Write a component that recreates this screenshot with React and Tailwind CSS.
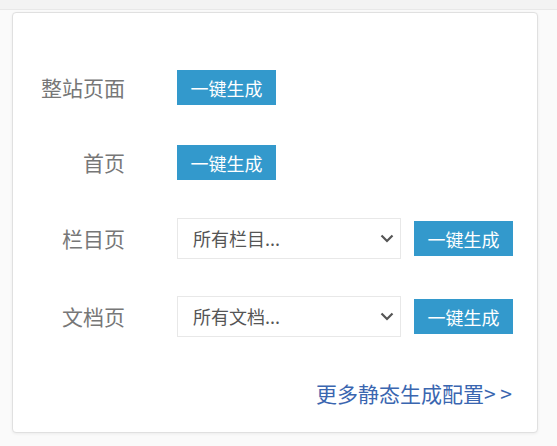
import React from 'react'

const GenButton = () => (
  <button className="w-[99px] h-[35px] bg-[#3399cc] text-white text-[18px] leading-none flex items-center justify-center">
    一键生成
  </button>
)

const FakeSelect = ({ text }) => (
  <div className="w-[224px] h-[41px] border border-[#e8e8e8] bg-white flex items-center justify-between pl-[15px] pr-[6px] text-[18px] text-[#555]">
    <span>{text}</span>
    <svg width="14" height="9" viewBox="0 0 14 9" fill="none">
      <path d="M1.5 1.5 L7 7 L12.5 1.5" stroke="#555" strokeWidth="2.2" />
    </svg>
  </div>
)

const Row = ({ label, className, children }) => (
  <div className={`flex items-center h-[41px] ${className || ''}`}>
    <div className="w-[112px] text-right text-[21px] text-[#777] leading-none">{label}</div>
    <div className="ml-[52px] flex items-center gap-[13px]">{children}</div>
  </div>
)

export default function App() {
  return (
    <div className="w-[557px] h-[446px] bg-[#fafafa] font-['Noto_Sans_CJK_SC','Microsoft_YaHei',sans-serif]">
      <div className="h-[10px] bg-[#f3f3f3] border-b border-[#e8e8e8]" />
      <div className="pl-3 pt-[2px]">
        <div className="w-[526px] h-[421px] bg-white border border-[#e0e0e0] rounded-[4px] shadow-[0_1px_3px_rgba(0,0,0,0.06)] pt-[54px]">
          <Row label="整站页面">
            <GenButton />
          </Row>
          <Row label="首页" className="mt-[34px]">
            <GenButton />
          </Row>
          <Row label="栏目页" className="mt-[35px]">
            <FakeSelect text="所有栏目..." />
            <GenButton />
          </Row>
          <Row label="文档页" className="mt-[37px]">
            <FakeSelect text="所有文档..." />
            <GenButton />
          </Row>
          <div className="mt-[41px] pr-[25px] text-right text-[21px] leading-[30px] text-[#3a66b0]">
            更多静态生成配置&gt; &gt;
          </div>
        </div>
      </div>
    </div>
  )
}
